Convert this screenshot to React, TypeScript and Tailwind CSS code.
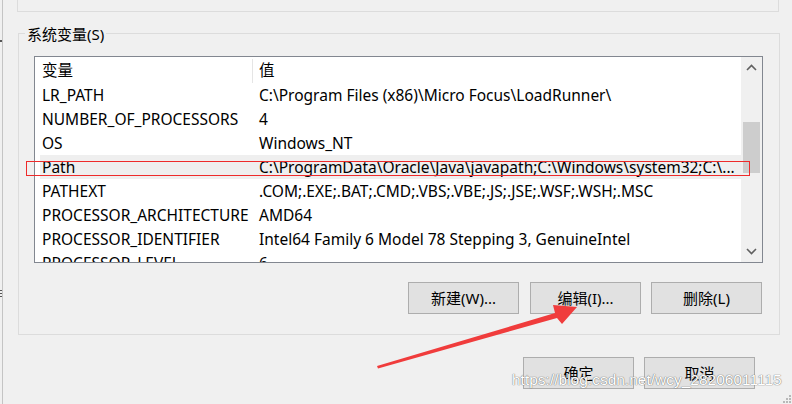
import React from 'react';

const rows: [string, string][] = [
  ['LR_PATH', 'C:\\Program Files (x86)\\Micro Focus\\LoadRunner\\'],
  ['NUMBER_OF_PROCESSORS', '4'],
  ['OS', 'Windows_NT'],
  ['Path', 'C:\\ProgramData\\Oracle\\Java\\javapath;C:\\Windows\\system32;C:\\...'],
  ['PATHEXT', '.COM;.EXE;.BAT;.CMD;.VBS;.VBE;.JS;.JSE;.WSF;.WSH;.MSC'],
  ['PROCESSOR_ARCHITECTURE', 'AMD64'],
  ['PROCESSOR_IDENTIFIER', 'Intel64 Family 6 Model 78 Stepping 3, GenuineIntel'],
  ['PROCESSOR_LEVEL', '6'],
];

const Chevron = ({ down }: { down?: boolean }) => (
  <svg width="11" height="7" viewBox="0 0 11 7">
    <polyline
      points={down ? '1,1 5.5,5.5 10,1' : '1,6 5.5,1.5 10,6'}
      fill="none"
      stroke="#606060"
      strokeWidth="1.6"
    />
  </svg>
);

const Btn = ({ label, className = '' }: { label: string; className?: string }) => (
  <button
    className={`w-[111px] h-[32px] shrink-0 bg-[#e1e1e1] border border-[#adadad] text-[15px] text-black flex items-center justify-center ${className}`}
  >
    {label}
  </button>
);

export default function App() {
  return (
    <div className="w-[792px] h-[404px] bg-[#f0f0f0] relative overflow-hidden flex font-['Noto_Sans','Noto_Sans_CJK_SC',sans-serif] text-[15px] text-black">
      {/* edge of the window behind */}
      <div className="w-[3px] h-full shrink-0 border-r border-[#c4c4c4] flex flex-col">
        <div className="mt-[40px] h-[2px] w-[2px] bg-[#555]" />
        <div className="mt-[248px] h-[1px] w-[2px] bg-[#555]" />
        <div className="mt-[2px] h-[1px] w-[2px] bg-[#555]" />
        <div className="mt-[2px] h-[1px] w-[2px] bg-[#555]" />
      </div>

      <div className="flex-1 flex flex-col">
        {/* user variables group (bottom part) */}
        <div className="ml-[14px] w-[762px] h-[12px] border-x border-b border-[#dcdcdc]" />

        {/* system variables group */}
        <div className="mt-[21px] ml-[15px] w-[762px] h-[302px] border border-[#dcdcdc] relative flex flex-col">
          <span className="absolute top-[-10px] left-[6px] px-[2px] leading-[20px] bg-[#f0f0f0]">系统变量(S)</span>

          <div className="mt-[22px] ml-[15px] w-[729px] h-[207px] border border-[#828790] bg-white flex overflow-hidden">
            <div className="flex-1 flex flex-col overflow-hidden text-[15.5px]">
              <div className="h-[26px] shrink-0 flex items-center pt-[1px]">
                <div className="w-[217px] pl-[7px]">变量</div>
                <div className="w-px h-[24px] bg-[#e5e5e5]" />
                <div className="pl-[6px]">值</div>
              </div>
              {rows.map(([k, v]) => (
                <div
                  key={k}
                  className={`h-[24px] shrink-0 ml-[5px] pt-[1px] flex items-center whitespace-nowrap ${k === 'Path' ? 'bg-[#efefef]' : ''}`}
                >
                  <div className="w-[212px] shrink-0 pl-[2px]">{k}</div>
                  <div className="pl-[7px]">{v}</div>
                </div>
              ))}
            </div>
            <div className="w-[21px] shrink-0 bg-[#f0f0f0] flex flex-col items-center">
              <div className="h-[20px] flex items-center justify-center">
                <Chevron />
              </div>
              <div className="mt-[45px] w-[17px] h-[51px] bg-[#cdcdcd]" />
              <div className="flex-1" />
              <div className="h-[22px] flex items-center justify-center">
                <Chevron down />
              </div>
            </div>
          </div>

          <div className="mt-[19px] ml-[389px] flex">
            <Btn label="新建(W)..." />
            <Btn label="编辑(I)..." className="ml-[11px]" />
            <Btn label="删除(L)" className="ml-[10px]" />
          </div>
        </div>

        {/* dialog buttons */}
        <div className="mt-[22px] ml-[520px] flex">
          <Btn label="确定" />
          <Btn label="取消" className="ml-[10px]" />
        </div>
      </div>

      {/* annotations: red box + arrow */}
      <svg className="absolute left-0 top-0 z-10 pointer-events-none" width="792" height="404" viewBox="0 0 792 404">
        <rect x="26.5" y="161.5" width="723" height="14" fill="none" stroke="#ee2b2b" strokeWidth="1" shapeRendering="crispEdges" />
        <polygon points="377,366 378,368.5 557,318 562,324 577,307 553,305 555,313" fill="#f03c3c" />
      </svg>
      <span className="absolute left-[512px] top-[370px] z-10 font-['Liberation_Sans',sans-serif] text-[15.5px] leading-[20px] text-white whitespace-nowrap [text-shadow:0_0_1px_#6f6f6f,0_0_1px_#6f6f6f]">
        https://blog.csdn.net/wcy_28206011115
      </span>
      <svg className="absolute right-[1px] bottom-[1px]" width="9" height="9" viewBox="0 0 9 9">
        <rect x="7" y="1" width="2" height="2" fill="#b8b8b8" />
        <rect x="4" y="4" width="2" height="2" fill="#b8b8b8" />
        <rect x="7" y="4" width="2" height="2" fill="#b8b8b8" />
        <rect x="1" y="7" width="2" height="2" fill="#b8b8b8" />
        <rect x="4" y="7" width="2" height="2" fill="#b8b8b8" />
        <rect x="7" y="7" width="2" height="2" fill="#b8b8b8" />
      </svg>
    </div>
  );
}
